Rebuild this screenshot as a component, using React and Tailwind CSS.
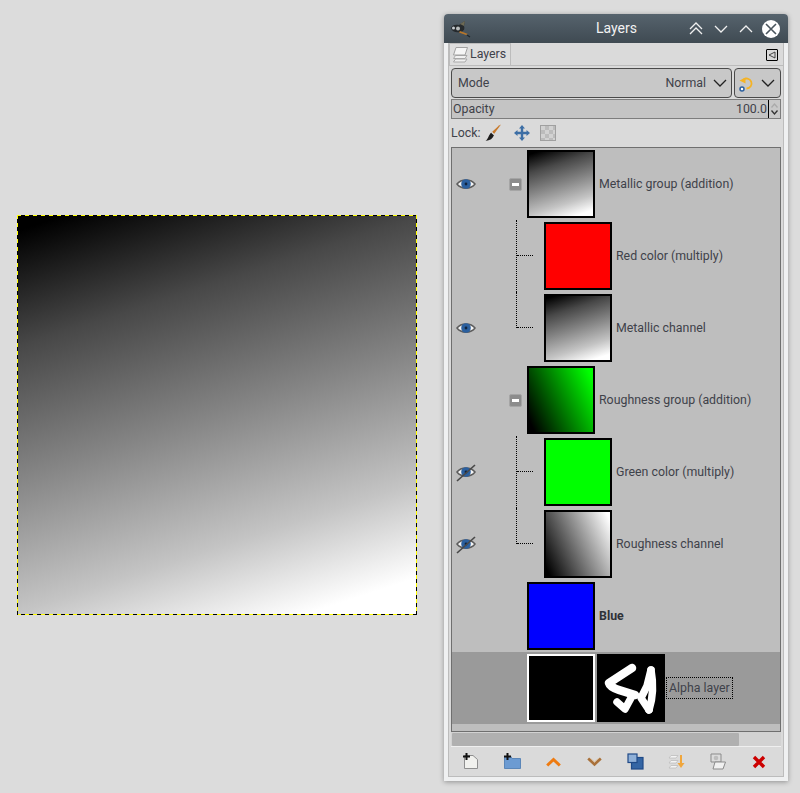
import React from "react";

const FONT = "font-['Roboto',sans-serif]";

/* =============================
      ICONS
============================= */
const Eye = ({ off }) => (
  <svg width="20" height="20" viewBox="0 0 20 20">
    <path d="M1 10 C5 4.5 15 4.5 19 10 C15 15.5 5 15.5 1 10Z" fill="#f4f4f4" stroke="#5d5d5d" strokeWidth="1.5" />
    <circle cx="10" cy="10" r="4.8" fill="#2a5f9e" />
    <circle cx="10" cy="10" r="1.4" fill="#10243f" />
    {off && <path d="M1 19 L19 3" stroke="#4a4a4a" strokeWidth="1.6" />}
  </svg>
);

const Collapse = () => (
  <div className="w-[13px] h-[13px] bg-[#8c8c8c] border border-[#a5a5a5] rounded-[2px] flex items-center justify-center">
    <div className="w-[7px] h-[3px] bg-white" />
  </div>
);

const Chevron = ({ up, className = "" }) => (
  <svg width="14" height="8" viewBox="0 0 14 8" className={className}>
    <path d={up ? "M1 7 L7 1 L13 7" : "M1 1 L7 7 L13 1"} fill="none" stroke="currentColor" strokeWidth="1.3" />
  </svg>
);

const GimpLogo = () => (
  <svg width="22" height="18" viewBox="0 0 22 18">
    <path d="M1 8 C2 5 6 4 9 5 L15 1 L14 6 C15 9 14 11 11 12 C6 13 2 12 1 8Z" fill="#262a2d" />
    <path d="M10 4 L15 1 L14 6Z" fill="#6d6a55" />
    <circle cx="3.5" cy="8" r="1.5" fill="#c9ced2" />
    <circle cx="8" cy="8.5" r="2" fill="#b8bcbc" />
    <path d="M10 11 L18 14 L16 15 L9 12.5Z" fill="#b9772a" />
    <path d="M17 15 L20 17" stroke="#20262a" strokeWidth="1.2" />
  </svg>
);

const LayersTabIcon = () => (
  <svg width="17" height="18" viewBox="0 0 17 18">
    <path d="M1.5 16 H13 L15 13 H3.5Z" fill="#f1f1f1" stroke="#a9a9a9" />
    <path d="M1.5 12.5 H13 L15 9.5 H3.5Z" fill="#f1f1f1" stroke="#a9a9a9" />
    <path d="M1.5 9 L4 1.5 H15.5 L13 9Z" fill="#f5f5f5" stroke="#a1a1a1" />
  </svg>
);

const SpreadIcon = () => (
  <svg width="16" height="17" viewBox="0 0 16 17">
    <path d="M4 5 A5 5 0 1 1 7.5 13.5" fill="none" stroke="#f5b325" strokeWidth="1.8" />
    <path d="M0.5 5.5 L6.5 2.5 L6.5 8.5Z" fill="#f5b325" />
    <circle cx="3" cy="14" r="2" fill="#fff" stroke="#2a5f9e" strokeWidth="1.5" />
  </svg>
);

const LockBrush = () => (
  <svg width="17" height="18" viewBox="0 0 17 18">
    <path d="M16 0.5 L9 10 L7 8 L14 1.5Z" fill="#c87a2c" />
    <path d="M6.5 8.5 L9 11 C8 14.5 5 16.5 0.5 17 C3.5 15 3.5 10.5 6.5 8.5Z" fill="#1d1d1d" />
    <path d="M6.5 8.2 L9 10.6" stroke="#d8d8d8" strokeWidth="1.3" />
  </svg>
);

const LockMove = () => (
  <svg width="16" height="16" viewBox="0 0 16 16" fill="#3c6ea5">
    <path d="M8 0 L11 3.5 H9.2 V6.8 H12.5 V5 L16 8 L12.5 11 V9.2 H9.2 V12.5 H11 L8 16 L5 12.5 H6.8 V9.2 H3.5 V11 L0 8 L3.5 5 V6.8 H6.8 V3.5 H5Z" />
  </svg>
);

const LockAlpha = () => (
  <div className="w-[16px] h-[16px] border border-[#a0a0a0] bg-[conic-gradient(#bcbcbc_25%,#d2d2d2_0_50%,#bcbcbc_0_75%,#d2d2d2_0)] bg-[length:8px_8px]" />
);

const Plus = () => (
  <path d="M3.5 0 V7 M0 3.5 H7" stroke="#111" strokeWidth="2" />
);

const NewLayerIcon = () => (
  <svg width="15" height="17" viewBox="0 0 15 17">
    <path d="M1.5 2.5 H10 L14.5 6.5 V15.5 H1.5Z" fill="#f1f1ee" stroke="#8f8f8f" />
    <Plus />
  </svg>
);

const NewGroupIcon = () => (
  <svg width="17" height="17" viewBox="0 0 17 17">
    <path d="M0.5 3.5 H7 L8 5.5 H16.5 V15.5 H0.5Z" fill="#6c9bd2" stroke="#5b86b8" />
    <Plus />
  </svg>
);

const RaiseIcon = () => (
  <svg width="15" height="10" viewBox="0 0 15 10">
    <path d="M1.2 8.5 L7.5 2.5 L13.8 8.5" fill="none" stroke="#ee7b11" strokeWidth="3" />
  </svg>
);

const LowerIcon = () => (
  <svg width="15" height="10" viewBox="0 0 15 10">
    <path d="M1.2 1.5 L7.5 7.5 L13.8 1.5" fill="none" stroke="#a9713a" strokeWidth="2.6" />
    <path d="M3.5 1.5 L7.5 5 L11.5 1.5" fill="none" stroke="#d8b48a" strokeWidth="1" />
  </svg>
);

const DuplicateIcon = () => (
  <svg width="17" height="17" viewBox="0 0 17 17">
    <rect x="4.5" y="4.5" width="11.5" height="11.5" fill="#3465a4" stroke="#204a87" strokeWidth="1.2" />
    <rect x="1" y="1" width="9" height="8.5" fill="#8fb0d8" stroke="#204a87" strokeWidth="1.2" />
  </svg>
);

const MergeIcon = () => (
  <svg width="17" height="16" viewBox="0 0 17 16">
    <path d="M1 4 L3 1.5 H10 L8 4Z M1 9 L3 6.5 H10 L8 9Z M1 14 L3 11.5 H10 L8 14Z" fill="#f4f4f4" stroke="#bcbcbc" strokeWidth="0.8" />
    <path d="M13 1 V10" stroke="#f0a63c" strokeWidth="2" />
    <path d="M9.5 9 H16.5 L13 14Z" fill="#f0a63c" />
  </svg>
);

const AnchorIcon = () => (
  <svg width="16" height="17" viewBox="0 0 16 17">
    <path d="M1 1 H11 V9 H1Z" fill="#dcdcdc" stroke="#8b8b8b" />
    <path d="M3 16 L5 9 H15.5 L13 16Z" fill="#f0f0f0" stroke="#8b8b8b" />
    <circle cx="6" cy="5" r="2.3" fill="#bdbdbd" />
  </svg>
);

const DeleteIcon = () => (
  <svg width="14" height="14" viewBox="0 0 14 14">
    <path d="M2 2 L12 12 M12 2 L2 12" stroke="#cc0000" strokeWidth="3.4" />
  </svg>
);

const AlphaMask = () => (
  <svg width="68" height="68" viewBox="0 0 68 68" className="block bg-black">
    <g fill="none" stroke="#fff" strokeLinecap="round" strokeLinejoin="round">
      <path d="M35 14 L12 29 Q13 33 22 36 L38 41" strokeWidth="8.5" />
      <path d="M20 48 L28 55 L34 44" strokeWidth="7.5" />
      <path d="M54 16 L50 32 L44 44 L52 56" strokeWidth="7.5" />
      <path d="M54 16 Q58 38 52 56" strokeWidth="7.5" />
    </g>
  </svg>
);

/* =============================
      LAYER ROWS
============================= */
const METAL = "bg-[linear-gradient(162deg,#000_3%,#484848_25%,#858585_50%,#c4c4c4_75%,#fff_93%)]";

const LAYERS = [
  { name: "Metallic group (addition)", thumb: METAL, eye: true, group: true },
  { name: "Red color (multiply)", thumb: "bg-[#ff0000]", child: true, branch: "mid" },
  { name: "Metallic channel", thumb: METAL, eye: true, child: true, branch: "end" },
  { name: "Roughness group (addition)", thumb: "bg-[linear-gradient(65deg,#000_6%,#00ff00_94%)]", group: true },
  { name: "Green color (multiply)", thumb: "bg-[#00ff00]", eye: "off", child: true, branch: "mid" },
  { name: "Roughness channel", thumb: "bg-[linear-gradient(65deg,#000_4%,#fff_96%)]", eye: "off", child: true, branch: "end" },
  { name: "Blue", thumb: "bg-[#0000ff]", bold: true },
];

const Branch = ({ kind }) => (
  <>
    <div
      className={
        kind === "mid"
          ? "absolute left-[64px] top-0 h-[72px] border-l border-dotted border-black"
          : "absolute left-[64px] top-0 h-[36px] border-l border-dotted border-black"
      }
    />
    <div className="absolute left-[65px] top-[35px] w-[16px] border-t border-dotted border-black" />
  </>
);

const LayerRow = ({ layer }) => (
  <div className="relative h-[72px] flex items-center">
    <div className="w-[28px] flex justify-center">
      {layer.eye && <Eye off={layer.eye === "off"} />}
    </div>
    <div className="w-[47px] pl-[29px] h-[13px]">{layer.group && <Collapse />}</div>
    {layer.child && <Branch kind={layer.branch} />}
    <div className={layer.child ? "ml-[17px] flex items-center" : "flex items-center"}>
      <div className={`w-[68px] h-[68px] border-2 border-black ${layer.thumb}`} />
    </div>
    <span className={layer.bold ? "ml-[4px] font-bold text-[#2f3238]" : "ml-[4px] text-[#3f424a]"}>{layer.name}</span>
  </div>
);

/* =============================
      DOCK WINDOW
============================= */
const LayersDock = () => (
  <div className="w-[344px] h-[767px] ml-[27px] mt-[14px] bg-[#eff0f1] rounded-t-[4px] shadow-[0_1px_5px_rgba(0,0,0,0.35)] flex flex-col">
    <div className="h-[29px] shrink-0 rounded-t-[4px] bg-[linear-gradient(#56636d,#3f4a52)] flex items-center pl-[6px] pr-[8px] text-white">
      <GimpLogo />
      <span className="flex-1 text-center text-[14px] pl-[72px] text-[#f2f2f2]">Layers</span>
      <div className="flex items-center gap-[11px] text-[#f0f0f0]">
        <div className="flex flex-col gap-[1px]">
          <Chevron up />
          <Chevron up className="-mt-[4px]" />
        </div>
        <Chevron />
        <Chevron up />
      </div>
      <div className="ml-[9px] w-[18px] h-[18px] rounded-full bg-white flex items-center justify-center">
        <svg width="12" height="12" viewBox="0 0 12 12">
          <path d="M1 1 L11 11 M11 1 L1 11" stroke="#4a555d" strokeWidth="1.6" />
        </svg>
      </div>
    </div>

    <div className="flex-1 ml-[4px] mr-[4px] mb-[5px] bg-[#dadada] border-x border-b border-[#bcbcbc] flex flex-col">
      <div className="h-[23px] shrink-0 flex items-end border-b border-[#bcbcbc] relative">
        <div className="h-[23px] w-[62px] -mb-[1px] border border-[#bcbcbc] bg-[#dedede] flex items-center pl-[2px] gap-[1px] text-[#3f424a]">
          <LayersTabIcon />
          <span>Layers</span>
        </div>
        <div className="absolute right-[5px] top-[6px] w-[12px] h-[12px] border border-black rounded-[1px] flex items-center justify-center">
          <svg width="8" height="8" viewBox="0 0 8 8">
            <path d="M7 1 L1 4 L7 7Z" fill="none" stroke="#333" strokeWidth="0.9" />
          </svg>
        </div>
      </div>

      <div className="px-[2px] flex flex-col">
        <div className="flex gap-[2px] mt-[2px] h-[30px]">
          <div className="flex-1 border border-[#4a4a4a] rounded-[4px] bg-[#c8c8c8] flex items-center pl-[6px] pr-[4px] text-[#3f424a]">
            <span className="flex-1">Mode</span>
            <span>Normal</span>
            <Chevron className="ml-[7px] text-[#222]" />
          </div>
          <div className="w-[47px] border border-[#4a4a4a] rounded-[4px] bg-[#c8c8c8] flex items-center pl-[4px] pr-[5px] justify-between">
            <SpreadIcon />
            <Chevron className="text-[#222]" />
          </div>
        </div>
        <div className="h-[20px] mt-[1px] border border-[#7d7d7d] bg-[#c4c4c4] flex items-center text-[#3f424a]">
          <span className="flex-1 pl-[1px]">Opacity</span>
          <span>100.0</span>
          <div className="w-[1px] h-full bg-black ml-[1px]" />
          <div className="w-[11px] h-full flex flex-col items-center justify-center bg-[#c8c8c8] gap-[2px]">
            <svg width="7" height="5" viewBox="0 0 7 5"><path d="M0.5 4.5 L3.5 1 L6.5 4.5" fill="none" stroke="#aaa" strokeWidth="1.3" /></svg>
            <svg width="7" height="5" viewBox="0 0 7 5"><path d="M0.5 0.5 L3.5 4 L6.5 0.5" fill="none" stroke="#333" strokeWidth="1.3" /></svg>
          </div>
        </div>
        <div className="h-[28px] flex items-center text-[#3f424a]">
          <span>Lock:</span>
          <div className="ml-[5px]"><LockBrush /></div>
          <div className="ml-[12px]"><LockMove /></div>
          <div className="ml-[10px]"><LockAlpha /></div>
        </div>
        <div className="h-[585px] border border-[#6f6f6f] bg-[#bebebe] flex flex-col text-[#3f424a]">
          {LAYERS.map((layer) => (
            <LayerRow key={layer.name} layer={layer} />
          ))}
          <div className="relative h-[72px] bg-[#9a9a9a] flex items-center pl-[75px]">
            <div className="w-[68px] h-[68px] border-2 border-white bg-black" />
            <div className="ml-[2px]"><AlphaMask /></div>
            <span className="ml-[1px] px-[2px] h-[22px] leading-[20px] border border-dotted border-black text-[#3f424a]">Alpha layer</span>
          </div>
        </div>
        <div className="h-[15px] bg-[#d2d2d2] border-b border-[#efefef] flex items-center">
          <div className="ml-[1px] w-[287px] h-[13px] rounded-[1px] bg-[#b0b0b0]" />
        </div>
        <div className="h-[29px] flex items-center -ml-[1px]">
          <div className="w-[41px] flex justify-center"><NewLayerIcon /></div>
          <div className="w-[42px] flex justify-center"><NewGroupIcon /></div>
          <div className="w-[41px] flex justify-center"><RaiseIcon /></div>
          <div className="w-[41px] flex justify-center"><LowerIcon /></div>
          <div className="w-[41px] flex justify-center"><DuplicateIcon /></div>
          <div className="w-[41px] flex justify-center"><MergeIcon /></div>
          <div className="w-[41px] flex justify-center"><AnchorIcon /></div>
          <div className="w-[42px] flex justify-center"><DeleteIcon /></div>
        </div>
      </div>
    </div>
  </div>
);

/* =============================
      PAGE
============================= */
export default function App() {
  return (
    <div className={`w-[800px] h-[793px] bg-[#dcdcdc] flex overflow-hidden text-[12.35px] ${FONT}`}>
      <div className={`ml-[17px] mt-[215px] w-[400px] h-[400px] shrink-0 relative ${METAL}`}>
        {/* selection outline */}
        <div className="absolute left-0 top-0 w-full h-[1px] bg-[repeating-linear-gradient(90deg,#ffff00_0_4px,#000_4px_8px)]" />
        <div className="absolute left-0 bottom-0 w-full h-[1px] bg-[repeating-linear-gradient(90deg,#ffff00_0_4px,#000_4px_8px)]" />
        <div className="absolute left-0 top-0 h-full w-[1px] bg-[repeating-linear-gradient(180deg,#ffff00_0_4px,#000_4px_8px)]" />
        <div className="absolute right-0 top-0 h-full w-[1px] bg-[repeating-linear-gradient(180deg,#ffff00_0_4px,#000_4px_8px)]" />
      </div>
      <LayersDock />
    </div>
  );
}
